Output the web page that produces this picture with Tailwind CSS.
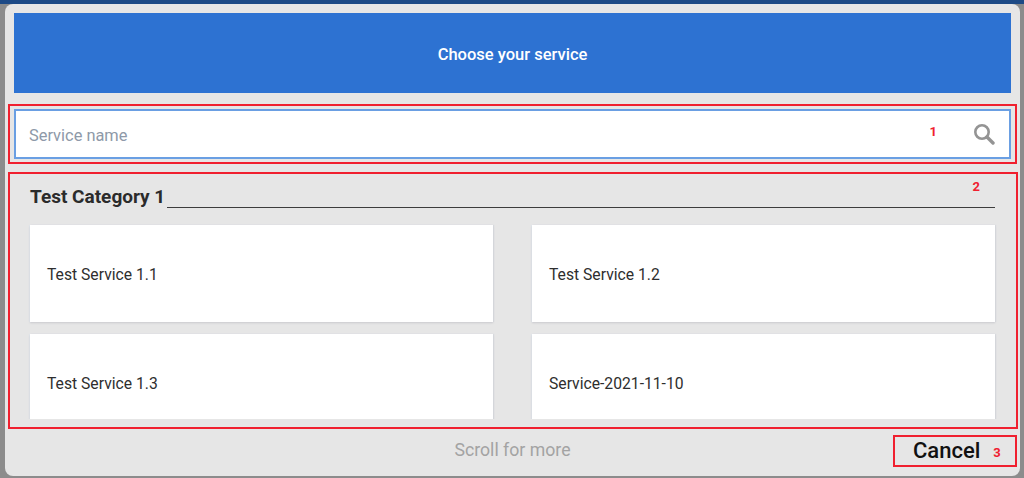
<!DOCTYPE html>
<html lang="en">
<head>
    <meta charset="UTF-8">
    <title>Choose your service</title>
    <script src="https://cdn.jsdelivr.net/npm/@tailwindcss/browser@4"></script>
</head>
<body class="bg-[#8c8c8c] overflow-hidden font-['Roboto',sans-serif]">
    <div class="w-[1024px] h-[478px] overflow-hidden">
        <div class="h-[4px] bg-[#1d4a86]"></div>
        <!-- Dialog -->
        <div class="ml-[5px] w-[1015px] h-[472px] bg-[#e6e6e6] rounded-[8px] pt-[9px] relative">
            <!-- Header -->
            <div class="ml-[9px] w-[997px] h-[80px] bg-[#2d72d2] flex items-center justify-center pt-[4px] text-white text-[16.5px] font-medium">Choose your service</div>

            <!-- Search -->
            <div class="mt-[11px] ml-[3px] w-[1009px] h-[60px] border-2 border-[#f0202f] pt-[3px] pl-[4px]">
                <div class="w-[997px] h-[50px] bg-white border-2 border-[#6a9fe3] flex items-center pl-[13px] pr-[14px]">
                    <span class="text-[16.4px] text-[#8e99a8] pt-[4px]">Service name</span>
                    <span class="ml-auto mr-[36px] mb-[5px] text-[13px] font-bold text-[#f0202f]">1</span>
                    <svg class="w-[22px] h-[22px]" viewBox="0 0 22 22" fill="none" stroke="#949494">
                        <circle cx="9" cy="9" r="6.7" stroke-width="2.6"/>
                        <path d="M14 14l6 6" stroke-width="3.4" stroke-linecap="round"/>
                    </svg>
                </div>
            </div>

            <!-- Services -->
            <div class="mt-[8px] ml-[3px] w-[1010px] h-[257px] border-2 border-[#f0202f] relative">
                <span class="absolute right-[36px] top-[3px] text-[13px] font-bold text-[#f0202f]">2</span>
                <div class="h-[245px] overflow-hidden pl-[20px] pr-[21px] pt-[10px]">
                    <div class="flex items-end h-[23px]">
                        <h2 class="text-[19px] leading-[23px] mb-[-1px] font-bold text-[#2b2b2b] whitespace-nowrap">Test Category 1</h2>
                        <div class="flex-1 h-[1.5px] bg-[#3d3d3d] ml-[2px] mb-[-1px]"></div>
                    </div>
                    <div class="grid grid-cols-[463px_463px] gap-x-[39px] gap-y-[12px] mt-[18px] pb-[2px]">
                        <div class="h-[97px] bg-white flex items-center pl-[17px] pt-[2px] text-[15.7px] text-[#2e2e2e] shadow-[0_1px_2px_#c9c9ce,-1px_0_1px_#e3e8ee,1px_0_1px_#d9dce0]">Test Service 1.1</div>
                        <div class="h-[97px] bg-white flex items-center pl-[17px] pt-[2px] text-[15.7px] text-[#2e2e2e] shadow-[0_1px_2px_#c9c9ce,-1px_0_1px_#e3e8ee,1px_0_1px_#d9dce0]">Test Service 1.2</div>
                        <div class="h-[97px] bg-white flex items-center pl-[17px] pt-[2px] text-[15.7px] text-[#2e2e2e] shadow-[0_1px_2px_#c9c9ce,-1px_0_1px_#e3e8ee,1px_0_1px_#d9dce0]">Test Service 1.3</div>
                        <div class="h-[97px] bg-white flex items-center pl-[17px] pt-[2px] text-[15.7px] text-[#2e2e2e] shadow-[0_1px_2px_#c9c9ce,-1px_0_1px_#e3e8ee,1px_0_1px_#d9dce0]">Service-2021-11-10</div>
                    </div>
                </div>
            </div>

            <!-- Footer -->
            <div class="relative h-[38px] mt-[6px] flex justify-center">
                <span class="text-[17.7px] leading-[30px] text-[#a3a3a3]">Scroll for more</span>
                <button class="absolute left-[888px] top-0 w-[124px] h-[32px] border-2 border-[#f0202f] flex items-center pl-[18px]">
                    <span class="text-[22px] leading-[26px] mt-[-1px] font-medium text-[#111111]">Cancel</span>
                    <span class="ml-[13px] mt-[4px] text-[13px] font-bold text-[#f0202f]">3</span>
                </button>
            </div>
        </div>
    </div>
</body>
</html>
